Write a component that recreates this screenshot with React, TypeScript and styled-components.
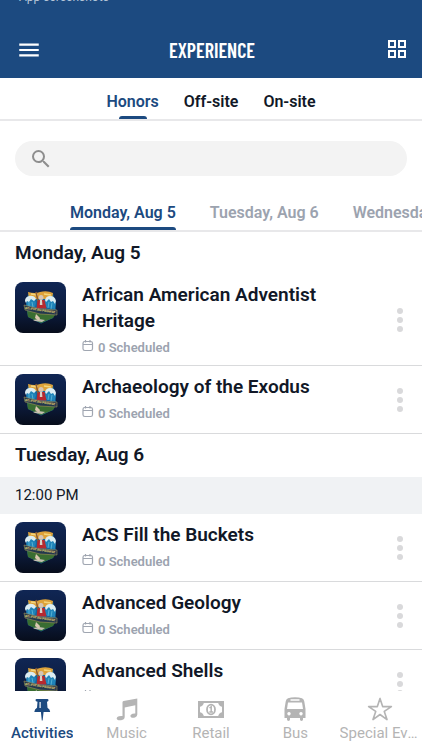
import React from 'react';
import styled, { createGlobalStyle } from 'styled-components';
import { MdMenu, MdSearch } from 'react-icons/md';
import { IoStarOutline } from 'react-icons/io5';

const navy = '#1c4a80';
const ink = '#111827';
const muted = '#9ca3af';

const GlobalStyle = createGlobalStyle`
  *, *::before, *::after { box-sizing: border-box; }
  html, body, #root { height: 100%; }
  body { margin: 0; background: #fff; color: ${ink}; font-family: Roboto, "Liberation Sans", sans-serif; }
  button { border: 0; padding: 0; background: none; font: inherit; color: inherit; cursor: pointer; }
  h1, h2, h3, p, ul { margin: 0; padding: 0; }
  ul { list-style: none; }
  svg { display: block; }
`;

const Screen = styled.div`
  height: 100vh;
  display: flex;
  flex-direction: column;
  overflow: hidden;
`;

const Header = styled.header`
  flex: none;
  background: ${navy};
  color: #fff;
  height: 78px;
  display: flex;
  flex-direction: column;
  justify-content: space-between;
`;

const Caption = styled.div`
  height: 4px;
  padding: 0 19px;
  display: flex;
  align-items: flex-end;
  overflow: hidden;
  font-size: 12px;
  line-height: 14px;
  color: #b5c5d8;
`;

const Bar = styled.div`
  height: 56px;
  padding: 0 10px 0 16px;
  display: grid;
  grid-template-columns: 26px 1fr 30px;
  align-items: center;
`;

const Title = styled.h1`
  font-family: "Barlow Condensed", "Roboto Condensed", Roboto, sans-serif;
  font-size: 20px;
  line-height: 28px;
  font-weight: 600;
  text-align: center;
`;

const IconButton = styled.button`
  display: flex;
  justify-content: center;
`;

const Tabs = styled.nav`
  flex: none;
  height: 43px;
  display: flex;
  justify-content: center;
  gap: 25px;
  border-bottom: 2px solid #e8e8ea;
`;

const Tab = styled.button<{ $active?: boolean }>`
  height: 41px;
  display: flex;
  flex-direction: column;
  align-items: center;
  justify-content: flex-end;
  gap: 3px;
  font-size: 16px;
  line-height: 22px;
  font-weight: 600;
  color: ${p => (p.$active ? navy : ink)};
  &::after {
    content: '';
    width: 28px;
    height: 3px;
    border-radius: 3px 3px 0 0;
    background: ${p => (p.$active ? navy : 'transparent')};
  }
`;

const SearchBox = styled.label`
  flex: none;
  margin: 20px 15px 0;
  height: 35px;
  padding: 0 16px 0 14px;
  border-radius: 18px;
  background: #f3f3f3;
  color: #8e8e8e;
  display: flex;
  align-items: center;
  gap: 8px;
`;

const SearchInput = styled.input`
  flex: 1;
  min-width: 0;
  border: 0;
  outline: 0;
  background: transparent;
  font: inherit;
  color: ${ink};
`;

const DateTabs = styled.nav`
  flex: none;
  height: 56px;
  padding-left: 70px;
  display: flex;
  gap: 34px;
  overflow: hidden;
  border-bottom: 2px solid #e8e8ea;
`;

const DateTab = styled.button<{ $active?: boolean }>`
  flex: none;
  display: flex;
  flex-direction: column;
  justify-content: flex-end;
  gap: 3px;
  font-size: 16px;
  line-height: 22px;
  font-weight: 600;
  white-space: nowrap;
  color: ${p => (p.$active ? navy : muted)};
  &::after {
    content: '';
    width: 100%;
    height: 3px;
    border-radius: 3px 3px 0 0;
    background: ${p => (p.$active ? navy : 'transparent')};
  }
`;

const Content = styled.main`
  flex: 1;
  min-height: 0;
  overflow: hidden;
`;

const DayHeading = styled.h2`
  height: 42px;
  padding: 0 15px;
  font-size: 19px;
  line-height: 42px;
  font-weight: 600;
`;

const TimeBand = styled.p`
  margin-top: 1px;
  padding: 0 15px;
  background: #f0f2f4;
  font-size: 15px;
  line-height: 37px;
`;

const Row = styled.li`
  display: grid;
  grid-template-columns: 51px 1fr 44px;
  column-gap: 16px;
  padding: 8px 0 8px 15px;
  border-bottom: 1px solid #d9dadc;
`;

const Thumb = styled.div`
  width: 51px;
  height: 51px;
  border-radius: 8px;
  overflow: hidden;
`;

const ItemTitle = styled.h3`
  font-size: 19px;
  line-height: 26px;
  font-weight: 600;
`;

const Status = styled.p`
  height: 23px;
  padding-top: 4px;
  display: flex;
  gap: 4px;
  font-size: 13px;
  line-height: 20px;
  font-weight: 600;
  color: ${muted};
`;

const MoreButton = styled.button`
  align-self: center;
  display: flex;
  flex-direction: column;
  align-items: center;
  gap: 3px;
`;

const Dot = styled.span`
  width: 6px;
  height: 6px;
  border-radius: 50%;
  background: #d9d9db;
`;

const BottomNav = styled.nav`
  flex: none;
  height: 59px;
  display: grid;
  grid-template-columns: repeat(5, minmax(0, 1fr));
  background: #fff;
`;

const NavItem = styled.button<{ $active?: boolean }>`
  display: flex;
  flex-direction: column;
  align-items: center;
  padding: 5px 2px 0;
  gap: 1px;
  font-size: 15px;
  line-height: 20px;
  font-weight: ${p => (p.$active ? 500 : 400)};
  color: ${p => (p.$active ? navy : '#b4b4b4')};
`;

const NavLabel = styled.span`
  max-width: 100%;
  overflow: hidden;
  white-space: nowrap;
  text-overflow: ellipsis;
`;

const GridIcon = () => (
  <svg width="20" height="20" viewBox="0 0 20 20" fill="none" stroke="#fff" strokeWidth="2">
    <path d="M2 1h6v6H2zM12 1h6v6h-6zM2 11h6v6H2zM12 11h6v6h-6z" />
  </svg>
);

const CalendarIcon = () => (
  <svg width="12" height="15" viewBox="0 0 12 15" fill="none" stroke="#a0a6b1" strokeWidth="1.2">
    <rect x="1" y="3.5" width="9.5" height="9" rx="1.8" />
    <path d="M1 6.5h9.5M3.5 2v2.4M8 2v2.4" />
  </svg>
);

const PinIcon = () => (
  <svg width="24" height="26" viewBox="0 0 24 26" fill="currentColor">
    <path fillRule="evenodd" d="M5.500 4.200Q5.500 3 6.700 3h10.600q1.200 0 1.200 1.200 0 1.200-1.500 1.600l.5 6q2.500 1.200 2.700 4.200h-6.600l-1 8.500h-.8L10.900 16H4.300q.2-3 2.700-4.200l.5-6q-2-.4-2-1.600zM9.500 6v6h1.200V6z" />
  </svg>
);

const MusicIcon = () => (
  <svg width="24" height="26" viewBox="0 0 24 26" fill="currentColor">
    <path fillRule="evenodd" d="M7.500 6.200Q7.500 5.200 8.500 4.900L22.300 2.500v16q0 2.200-2.300 3-2.400.8-4-.2-1.400-1.200-.1-2.600 1.300-1.300 4.400-1.200V9.300L9.700 11.400v9.800q0 2-2.600 2.800-2.900.8-4.700-.2-1.500-1.200-.1-2.700 1.500-1.400 5.200-1.100z" />
  </svg>
);

const MoneyIcon = () => (
  <svg width="28" height="26" viewBox="0 0 28 26" fill="none" stroke="currentColor">
    <rect x="2" y="6" width="24" height="15" strokeWidth="2" />
    <path d="M2 6h5Q6.500 10.500 2 11zM26 6h-5q.5 4.500 5 5zM2 21h5q-.5-4.500-5-5zM26 21h-5q.5-4.500 5-5z" fill="currentColor" stroke="none" />
    <ellipse cx="14" cy="13.500" rx="4" ry="4.800" strokeWidth="1.800" />
    <path d="M12.500 12 14.200 10.800v5M12.300 16h3.700" strokeWidth="1.500" />
  </svg>
);

const BusIcon = () => (
  <svg width="24" height="26" viewBox="0 0 24 26" fill="currentColor">
    <path fillRule="evenodd" d="M5 2.300Q8 1.300 12 1.300t7 1q2 .8 2.300 3.200L22.500 13v9H20v1.600q0 1.400-1.500 1.400T17 23.600V22H7v1.600Q7 25 5.500 25T4 23.600V22H1.500v-9L2.700 5.500Q3 3.100 5 2.300zM7.500 3.300v1.400h9V3.300zM5 6.500 4 13h16L19 6.500zM6 16a1.700 1.700 0 1 0 .01 0zM18 16a1.700 1.700 0 1 0 .01 0z" />
  </svg>
);

const CrestArt = () => (
  <svg width="51" height="51" viewBox="0 0 51 51">
    <defs>
      <linearGradient id="night" x2="0" y2="1">
        <stop stopColor="#102654" />
        <stop offset=".6" stopColor="#0c1b3c" />
        <stop offset="1" stopColor="#070d1b" />
      </linearGradient>
    </defs>
    <path fill="url(#night)" d="M0 0h51v51H0z" />
    <path d="m13 12 25-1 1 5 2 13-3 7-12 5.500L13 35l-2-13z" fill="#17669c" />
    <path d="M13 10q7 2 12 0 7-2 13 1l-1 6H14z" fill="#dda23a" />
    <path d="m16 12 7 1M29 12l7 1" stroke="#f2d57c" strokeWidth="1.400" />
    <path d="M12 24q-2-7 3-8 5-1 6 5l-1 4zM30 25q-1-8 4-9 6-1 7 6l-1 5z" fill="#1f83b9" />
    <path d="M10 19q0-4 4-5 5-1 7 3l-2 2-3-2-2 3-2-1-1 2zM30 18q1-4 5-4 5 0 6 5l-1 3-2-3-2 1-2-3-3 3z" fill="#dcedf2" />
    <path d="M14 20v5M17 20l1 5M34 20l-1 6M37 21l-1 6" stroke="#54b0d2" strokeWidth="1" />
    <path d="M22.500 18h7l2 8.500h-10z" fill="#b6292f" />
    <path d="M25 18h2l.4 5h-2.600z" fill="#d9d2c7" />
    <circle cx="26" cy="15.500" r="2.500" fill="#d6c5b5" />
    <path d="m23 19-2-9" stroke="#8b5b32" strokeWidth="1.500" />
    <path d="m12 29 28 4-2 3-12 5-13-6z" fill="#396d32" />
    <path d="m18 38 6-1 6 1-3 2-7-1z" fill="#c3bfb2" />
    <path d="m21 32 4 4-1 3-4-3z" fill="#d9c7b1" />
    <path d="m9 23 16 4 17 1v5l-17-1-15-4z" fill="#22384d" stroke="#b8a054" strokeWidth=".5" />
    <text x="10" y="27" transform="rotate(8 10 27)" fontSize="3" fontWeight="700" fill="#efd673">BELIEVE the PROMISE</text>
  </svg>
);

const ActivityRow = ({ title }: { title: string }) => (
  <Row>
    <Thumb><CrestArt /></Thumb>
    <div>
      <ItemTitle>{title}</ItemTitle>
      <Status><CalendarIcon />0 Scheduled</Status>
    </div>
    <MoreButton aria-label={`More options for ${title}`}><Dot /><Dot /><Dot /></MoreButton>
  </Row>
);

const navItems = [
  { label: 'Activities', icon: <PinIcon />, active: true },
  { label: 'Music', icon: <MusicIcon /> },
  { label: 'Retail', icon: <MoneyIcon /> },
  { label: 'Bus', icon: <BusIcon /> },
  { label: 'Special Events', icon: <IoStarOutline size={26} /> },
];

export default function App() {
  return (
    <Screen>
      <GlobalStyle />
      <Header>
        <Caption>App screenshots</Caption>
        <Bar>
          <IconButton aria-label="Menu"><MdMenu size={26} /></IconButton>
          <Title>EXPERIENCE</Title>
          <IconButton aria-label="Grid view"><GridIcon /></IconButton>
        </Bar>
      </Header>
      <Tabs aria-label="Location">
        <Tab $active>Honors</Tab>
        <Tab>Off-site</Tab>
        <Tab>On-site</Tab>
      </Tabs>
      <SearchBox>
        <MdSearch size={24} />
        <SearchInput type="text" aria-label="Search activities" />
      </SearchBox>
      <DateTabs aria-label="Date">
        <DateTab $active>Monday, Aug 5</DateTab>
        <DateTab>Tuesday, Aug 6</DateTab>
        <DateTab>Wednesday, Aug 7</DateTab>
      </DateTabs>
      <Content>
        <DayHeading>Monday, Aug 5</DayHeading>
        <ul>
          <ActivityRow title="African American Adventist Heritage" />
          <ActivityRow title="Archaeology of the Exodus" />
        </ul>
        <DayHeading>Tuesday, Aug 6</DayHeading>
        <TimeBand>12:00 PM</TimeBand>
        <ul>
          <ActivityRow title="ACS Fill the Buckets" />
          <ActivityRow title="Advanced Geology" />
          <ActivityRow title="Advanced Shells" />
        </ul>
      </Content>
      <BottomNav aria-label="Main">
        {navItems.map(item => (
          <NavItem key={item.label} $active={item.active}>
            {item.icon}
            <NavLabel>{item.label}</NavLabel>
          </NavItem>
        ))}
      </BottomNav>
    </Screen>
  );
}
